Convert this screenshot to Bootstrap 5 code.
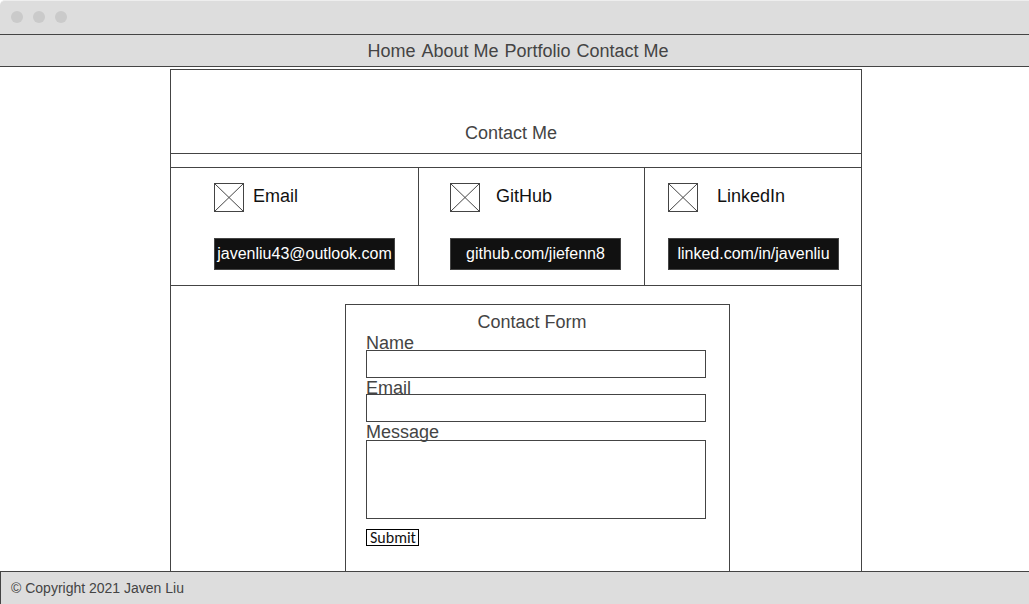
<!DOCTYPE html>
<html lang="en">
<head>
<meta charset="utf-8">
<meta name="viewport" content="width=device-width, initial-scale=1">
<title>Contact Me</title>
<link href="https://cdn.jsdelivr.net/npm/bootstrap@5.3.0/dist/css/bootstrap.min.css" rel="stylesheet">
<style>
  :root { --ink: #444; --bar: #ddd; }
  body { font-family: "Liberation Sans", Arial, sans-serif; font-size: 18px; line-height: 20px; color: var(--ink); background: #fff; }
  h1, h2, h3 { font-size: 18px; line-height: 20px; font-weight: 400; margin: 0; }
  .window-bar { height: 35px; padding: 0 0 2px 11px; gap: 10px; background: var(--bar); border-top: 1px solid #eee; border-bottom: 1px solid var(--ink); border-top-left-radius: 5px; }
  .window-dot { width: 12px; height: 12px; background: #cacaca; }
  .site-nav { height: 32px; gap: 6px; padding-left: 7px; background: var(--bar); border-bottom: 1px solid var(--ink); }
  .site-nav a { color: var(--ink); text-decoration: none; }
  main { padding: 2px 0 0 3px; }
  .frame { max-width: 692px; border: solid var(--ink); border-width: 1px 1px 0; }
  .page-title { height: 84px; padding: 0 10px 10px 0; border-bottom: 1px solid var(--ink); }
  .links { display: grid; grid-template-columns: 248fr 226fr 216fr; margin-top: 13px; border: solid var(--ink); border-width: 1px 0; }
  .link-cell { padding: 15px 23px 15px 31px; color: #111; }
  .link-cell:not(:last-child) { border-right: 1px solid var(--ink); }
  .link-cell:first-child { padding-left: 43px; }
  .link-cell:last-child { padding-left: 23px; padding-right: 22px; }
  .link-cell svg { display: block; flex: none; }
  .link-cell h3 { padding-bottom: 3px; }
  .link-head { gap: 16px; margin-bottom: 26px; }
  .link-cell:first-child .link-head { gap: 9px; }
  .link-cell:last-child .link-head { gap: 19px; }
  .link-btn { height: 32px; font-size: 16px; line-height: 30px; background: #111; border: 1px solid var(--ink); color: #fff; text-decoration: none; white-space: nowrap; }
  .contact-form { width: 100%; max-width: 385px; margin: 18px 0 0 174px; padding: 7px 23px 0 20px; border: solid var(--ink); border-width: 1px 1px 0; }
  .contact-form h2 { padding-right: 8px; margin-bottom: 1px; }
  .contact-form label { display: block; margin-bottom: -4px; }
  .contact-form label.label-name { margin-bottom: -3px; }
  .contact-form label.label-message { margin-bottom: -2px; }
  .contact-form .form-control { border: 1px solid var(--ink); border-radius: 0; background: transparent; padding: 0 6px; height: 28px; min-height: 0; resize: none; }
  .contact-form textarea.form-control { height: 79px; margin-bottom: 10px; }
  .submit-btn { display: block; height: 17px; padding: 0 2px 0 3px; border: 1px solid #000; background: #fff; color: #111; font: 400 16px/15px Carlito, Lato, sans-serif; }
  footer { height: 33px; padding-left: 10px; font-size: 14px; background: var(--bar); border: solid var(--ink); border-width: 1px 0 0 1px; }
</style>
</head>
<body class="d-flex flex-column min-vh-100">
<div class="window-bar d-flex align-items-center">
  <span class="window-dot rounded-circle"></span>
  <span class="window-dot rounded-circle"></span>
  <span class="window-dot rounded-circle"></span>
</div>
<nav class="site-nav d-flex justify-content-center align-items-center">
  <a href="#home">Home</a>
  <a href="#about">About Me</a>
  <a href="#portfolio">Portfolio</a>
  <a href="#contact">Contact Me</a>
</nav>
<main class="flex-grow-1 d-flex flex-column">
  <div class="frame w-100 mx-auto flex-grow-1 d-flex flex-column">
    <div class="page-title d-flex align-items-end justify-content-center"><h1>Contact Me</h1></div>
    <section class="links">
      <div class="link-cell">
        <div class="link-head d-flex align-items-center">
          <svg width="30" height="29" viewBox="0 0 30 29" fill="none" stroke="#444" aria-hidden="true"><rect x=".5" y=".5" width="29" height="28"/><path d="M.5.5l29 28M29.5.5l-29 28"/></svg>
          <h3>Email</h3>
        </div>
        <a class="link-btn d-block text-center" href="mailto:javenliu43@outlook.com">javenliu43@outlook.com</a>
      </div>
      <div class="link-cell">
        <div class="link-head d-flex align-items-center">
          <svg width="30" height="29" viewBox="0 0 30 29" fill="none" stroke="#444" aria-hidden="true"><rect x=".5" y=".5" width="29" height="28"/><path d="M.5.5l29 28M29.5.5l-29 28"/></svg>
          <h3>GitHub</h3>
        </div>
        <a class="link-btn d-block text-center" href="#github">github.com/jiefenn8</a>
      </div>
      <div class="link-cell">
        <div class="link-head d-flex align-items-center">
          <svg width="30" height="29" viewBox="0 0 30 29" fill="none" stroke="#444" aria-hidden="true"><rect x=".5" y=".5" width="29" height="28"/><path d="M.5.5l29 28M29.5.5l-29 28"/></svg>
          <h3>LinkedIn</h3>
        </div>
        <a class="link-btn d-block text-center" href="#linkedin">linked.com/in/javenliu</a>
      </div>
    </section>
    <form class="contact-form flex-grow-1">
      <h2 class="text-center">Contact Form</h2>
      <label class="label-name" for="name">Name</label>
      <input class="form-control" type="text" id="name">
      <label for="email">Email</label>
      <input class="form-control" type="email" id="email">
      <label class="label-message" for="message">Message</label>
      <textarea class="form-control" id="message"></textarea>
      <button class="submit-btn" type="submit">Submit</button>
    </form>
  </div>
</main>
<footer class="d-flex align-items-center">© Copyright 2021 Javen Liu</footer>
<script src="https://cdn.jsdelivr.net/npm/bootstrap@5.3.0/dist/js/bootstrap.bundle.min.js"></script>
</body>
</html>
